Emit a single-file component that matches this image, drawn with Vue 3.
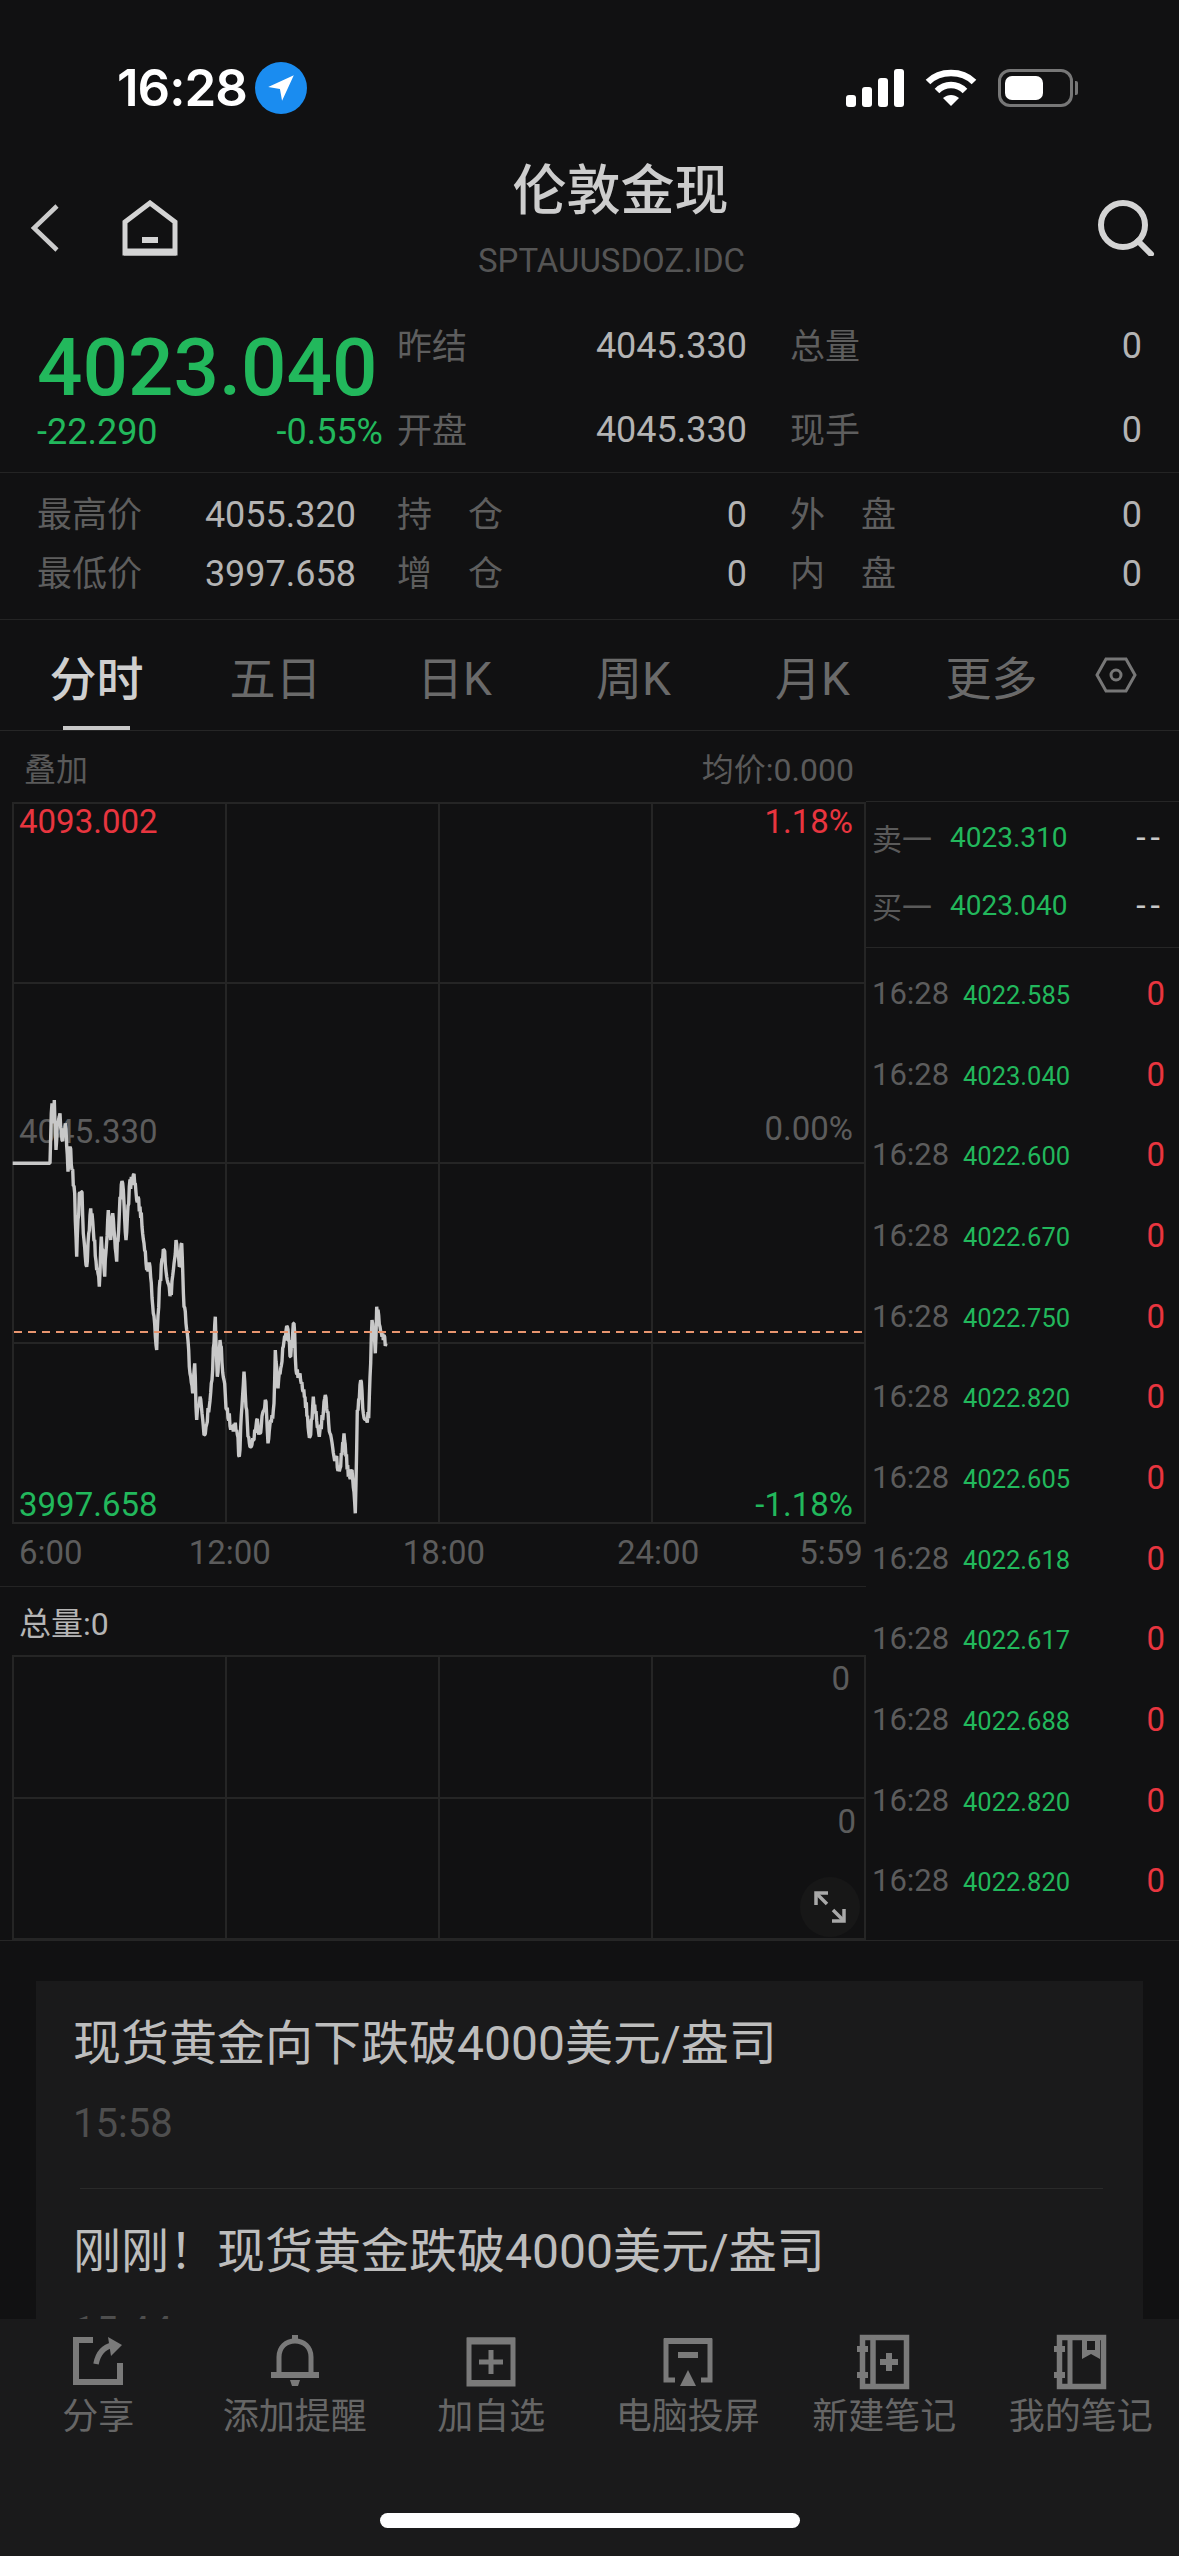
<template>
  <div class="page">
    <div class="status-bar">
      <div class="status-left">
        <span class="clock">16:28</span>
        <span class="locate">
          <svg width="32" height="32" viewBox="0 0 30 30"><path d="M27 3 L3 14 L14 16 L16 27 Z" fill="#fff" /></svg>
        </span>
      </div>
      <div class="status-right">
        <svg width="58" height="38" viewBox="0 0 58 38" fill="#fff">
          <rect x="0" y="26" width="10" height="12" rx="3" />
          <rect x="16" y="18" width="10" height="20" rx="3" />
          <rect x="32" y="9" width="10" height="29" rx="3" />
          <rect x="48" y="0" width="10" height="38" rx="3" />
        </svg>
        <svg width="52" height="38" viewBox="0 0 52 38" fill="none" stroke="#fff" stroke-width="6.5">
          <path d="M3 13 C15 1 37 1 49 13" />
          <path d="M12 22 C20 14 32 14 40 22" />
          <path d="M26 37 L18 29 C23 25 29 25 34 29 Z" fill="#fff" stroke="none" />
        </svg>
        <div class="battery">
          <div class="battery-shell"><div class="battery-fill"></div></div>
          <div class="battery-nub"></div>
        </div>
      </div>
    </div>

    <header class="nav">
      <div class="nav-left">
        <svg width="30" height="48" viewBox="0 0 30 48" fill="none" stroke="#ccc" stroke-width="4.5">
          <path d="M27 2 L4 24 L27 46" />
        </svg>
        <svg width="56" height="56" viewBox="0 0 56 56" fill="none" stroke="#d4d4d4">
          <path d="M3 53 V22 L28 3 L53 22 V53 Z" stroke-width="5" />
          <path d="M2 52 H54" stroke-width="7" />
          <path d="M20 40 H36" stroke-width="6" />
        </svg>
      </div>
      <div class="nav-title">
        <div class="nav-name">伦敦金现</div>
        <div class="nav-code">SPTAUUSDOZ.IDC</div>
      </div>
      <svg class="nav-search" width="58" height="56" viewBox="0 0 58 56" fill="none" stroke="#d4d4d4" stroke-width="6">
        <circle cx="26" cy="25" r="22" />
        <path d="M41 41 L54 54" stroke-linecap="round" />
      </svg>
    </header>

    <section class="quote">
      <div class="quote-main">
        <div class="last-price">4023.040</div>
        <div class="change"><span>-22.290</span><span>-0.55%</span></div>
      </div>
      <div v-for="cell in quoteCells" :key="cell.label" class="pair" :class="cell.col">
        <span class="pair-label">{{ cell.label }}</span>
        <span class="pair-value">{{ cell.value }}</span>
      </div>
    </section>

    <section class="stats">
      <div v-for="cell in statCells" :key="cell.label" class="pair" :class="cell.col">
        <span class="pair-label" :class="{ spaced: cell.spaced }">
          <i v-for="ch in cell.label" :key="ch">{{ ch }}</i>
        </span>
        <span class="pair-value">{{ cell.value }}</span>
      </div>
    </section>

    <nav class="tabs">
      <span v-for="(tab, i) in tabs" :key="tab" class="tab" :class="{ active: i === 0 }">{{ tab }}</span>
      <svg class="tab-gear" width="42" height="38" viewBox="0 0 42 38" fill="none" stroke="#777" stroke-width="3">
        <path d="M11 3 H31 L40 19 L31 35 H11 L2 19 Z" />
        <circle cx="21" cy="19" r="5" />
      </svg>
    </nav>

    <div class="market">
      <div class="charts">
        <div class="chart-head">
          <span>叠加</span>
          <span>均价:0.000</span>
        </div>
        <div class="chart price-chart">
          <div class="grid-cells">
            <div v-for="n in 16" :key="n" class="cell"></div>
          </div>
          <span class="mark tl up">4093.002</span>
          <span class="mark tr up">1.18%</span>
          <span class="mark ml">4045.330</span>
          <span class="mark mr">0.00%</span>
          <span class="mark bl down">3997.658</span>
          <span class="mark br down">-1.18%</span>
          <svg class="price-line" viewBox="0 0 854 722">
            <polyline :points="linePoints" fill="none" stroke="#c8c8c8" stroke-width="3.4" stroke-linejoin="bevel" />
            <path d="M2 530 H854" stroke="#e8956f" stroke-width="2" stroke-dasharray="8 6" />
          </svg>
        </div>
        <div class="axis">
          <span v-for="t in axisLabels" :key="t">{{ t }}</span>
        </div>
        <div class="volume-head">总量:0</div>
        <div class="chart volume-chart">
          <div class="grid-cells two">
            <div v-for="n in 8" :key="n" class="cell"></div>
          </div>
          <span class="vol-mark first">0</span>
          <span class="vol-mark second">0</span>
          <span class="expand">
            <svg width="34" height="34" viewBox="0 0 34 34" fill="none" stroke="#a8a8a8" stroke-width="3.5">
              <path d="M4 4 L14 14 M20 20 L30 30" />
              <path d="M3 15 V3 H15 M31 19 V31 H19" />
            </svg>
          </span>
        </div>
      </div>

      <aside class="side">
        <div class="book">
          <div v-for="b in book" :key="b.label" class="book-row">
            <span class="book-label">{{ b.label }}</span>
            <span class="book-price">{{ b.price }}</span>
            <span class="book-size">--</span>
          </div>
        </div>
        <div class="trades">
          <div v-for="(p, i) in trades" :key="i" class="trade-row">
            <span class="trade-time">16:28</span>
            <span class="trade-price">{{ p }}</span>
            <span class="trade-size">0</span>
          </div>
        </div>
      </aside>
    </div>

    <div class="feed">
      <div class="feed-card">
        <div class="news-item">
          <div class="news-title">现货黄金向下跌破4000美元/盎司</div>
          <div class="news-time">15:58</div>
        </div>
        <div class="news-divider"></div>
        <div class="news-item">
          <div class="news-title">刚刚！现货黄金跌破4000美元/盎司</div>
          <div class="news-time">15:44</div>
        </div>
      </div>
    </div>

    <footer class="toolbar">
      <div class="tools">
        <div class="tool">
          <svg width="54" height="54" viewBox="0 0 54 54" fill="none" stroke="#7a7a7a" stroke-width="6">
            <path d="M22 5 H5 V47 H49 V28" />
            <path d="M25 29 C27 18 32 12 42 10" stroke-width="5.5" />
            <path d="M37 2 L51 10 L40 21 Z" fill="#7a7a7a" stroke="none" />
          </svg>
          <span>分享</span>
        </div>
        <div class="tool">
          <svg width="54" height="54" viewBox="0 0 54 54" fill="none" stroke="#7a7a7a" stroke-width="5">
            <path d="M11 40 V22 C11 12 18 6 27 6 C36 6 43 12 43 22 V40" />
            <path d="M24 0 H30 V6 H24 Z" fill="#7a7a7a" stroke="none" />
            <path d="M3 40 H51" stroke-width="6" />
            <path d="M22 45 H32 L30 51 H24 Z" fill="#7a7a7a" stroke="none" />
          </svg>
          <span>添加提醒</span>
        </div>
        <div class="tool">
          <svg width="54" height="54" viewBox="0 0 54 54" fill="none" stroke="#7a7a7a" stroke-width="5">
            <rect x="5" y="5" width="44" height="44" />
            <path d="M3 6 H51" stroke-width="7" />
            <path d="M3 48 H51" stroke-width="6" />
            <path d="M27 15 V39 M15 27 H39" stroke-width="5" />
          </svg>
          <span>加自选</span>
        </div>
        <div class="tool">
          <svg width="54" height="54" viewBox="0 0 54 54" fill="none" stroke="#7a7a7a" stroke-width="5">
            <path d="M14 45 H5 V6 H49 V45 H40" />
            <path d="M3 6 H51" stroke-width="6" />
            <path d="M17 20 H37" stroke-width="6" />
            <path d="M27 35 L35 51 H19 Z" fill="#7a7a7a" stroke="none" />
          </svg>
          <span>电脑投屏</span>
        </div>
        <div class="tool">
          <svg width="54" height="56" viewBox="0 0 54 56" fill="none" stroke="#7a7a7a" stroke-width="5.5">
            <rect x="5.5" y="3.5" width="44" height="49" />
            <path d="M16 3 V53" />
            <rect x="0" y="12" width="11" height="6" fill="#7a7a7a" stroke="none" />
            <rect x="0" y="38" width="11" height="6" fill="#7a7a7a" stroke="none" />
            <path d="M32 19 V37 M23 28 H41" stroke-width="6" />
          </svg>
          <span>新建笔记</span>
        </div>
        <div class="tool">
          <svg width="54" height="56" viewBox="0 0 54 56" fill="none" stroke="#7a7a7a" stroke-width="5.5">
            <rect x="5.5" y="3.5" width="44" height="49" />
            <path d="M16 3 V53" stroke-width="5" />
            <rect x="0" y="12" width="11" height="6" fill="#7a7a7a" stroke="none" />
            <rect x="0" y="38" width="11" height="6" fill="#7a7a7a" stroke="none" />
            <path d="M28 3 H46 V25 L37 20 L28 25 Z" fill="#7a7a7a" stroke="none" />
            <rect x="33" y="7" width="8" height="9" fill="#1a1a1b" stroke="none" />
          </svg>
          <span>我的笔记</span>
        </div>
      </div>
      <div class="home-bar"></div>
    </footer>
  </div>
</template>

<script setup>
import { computed } from 'vue';

const quoteCells = [
  { label: '昨结', value: '4045.330', col: 'col-a' },
  { label: '总量', value: '0', col: 'col-b' },
  { label: '开盘', value: '4045.330', col: 'col-a' },
  { label: '现手', value: '0', col: 'col-b' },
];

const statCells = [
  { label: '最高价', value: '4055.320', col: 'col-0' },
  { label: '持仓', value: '0', col: 'col-a', spaced: true },
  { label: '外盘', value: '0', col: 'col-b', spaced: true },
  { label: '最低价', value: '3997.658', col: 'col-0' },
  { label: '增仓', value: '0', col: 'col-a', spaced: true },
  { label: '内盘', value: '0', col: 'col-b', spaced: true },
];

const tabs = ['分时', '五日', '日K', '周K', '月K', '更多'];
const axisLabels = ['6:00', '12:00', '18:00', '24:00', '5:59'];

const book = [
  { label: '卖一', price: '4023.310' },
  { label: '买一', price: '4023.040' },
];

const trades = [
  '4022.585', '4023.040', '4022.600', '4022.670', '4022.750', '4022.820',
  '4022.605', '4022.618', '4022.617', '4022.688', '4022.820', '4022.820',
];

// traced from the intraday curve, in 3x crop coordinates
const trace = [
  [38,250],[150,250],[152,170],[156,70],[160,130],[163,60],[168,210],[172,130],[180,100],[186,180],
  [196,130],[204,275],[210,200],[216,270],[224,340],[230,530],[238,340],[246,335],[250,460],[260,560],
  [272,385],[280,450],[290,570],[298,620],[304,470],[314,590],[325,390],[332,480],[338,400],[350,545],
  [360,350],[368,310],[378,480],[388,320],[400,285],[410,360],[420,380],[432,490],[440,570],[450,560],
  [460,700],[470,810],[480,600],[492,510],[500,590],[514,645],[528,480],[538,560],[545,490],[552,680],
  [562,760],[568,860],[578,940],[584,850],[590,1020],[600,950],[612,1065],[628,980],[636,900],[646,710],
  [652,890],[660,780],[672,900],[680,990],[694,1040],[710,1050],[718,1130],[732,875],[744,1070],[754,1100],
  [770,1020],[780,1060],[798,965],[804,1090],[822,970],[826,810],[834,925],[850,800],[862,740],[872,830],
  [882,730],[888,870],[900,880],[915,950],[930,1070],[940,950],[958,1070],[976,945],[990,1060],[1002,1130],
  [1020,1165],[1032,1060],[1045,1190],[1056,1170],[1066,1300],[1072,990],[1084,905],[1090,1000],[1106,1015],
  [1116,720],[1126,820],[1130,680],[1140,740],[1150,780],[1158,790],
];

const linePoints = computed(() => {
  let seed = 17;
  const jitter = () => {
    seed = (seed * 16807) % 2147483647;
    return seed / 2147483647 - 0.5;
  };
  const pts = [];
  trace.forEach(([x, y], i) => {
    const next = trace[i + 1];
    const steps = next && i > 0 ? Math.max(1, Math.round((next[0] - x) / 2)) : 1;
    for (let s = 0; s < steps; s++) {
      const t = s / steps;
      const yy = next ? y + (next[1] - y) * t : y;
      const xx = next ? x + (next[0] - x) * t : x;
      const noise = i > 1 && s > 0 ? jitter() * 40 : 0;
      pts.push(`${(xx / 3 - 12).toFixed(1)},${(1080 + (yy + noise) / 3 - 802).toFixed(1)}`);
    }
  });
  return pts.join(' ');
});
</script>

<style>
html,
body {
  margin: 0;
  background: #111112;
}
</style>

<style scoped>
.page {
  width: 1179px;
  height: 2556px;
  overflow: hidden;
  display: flex;
  flex-direction: column;
  background: #111112;
  color: #bbb;
  font-family: Roboto, "Noto Sans CJK SC", sans-serif;
}

.status-bar {
  height: 130px;
  flex: none;
  padding: 62px 101px 0 117px;
  box-sizing: border-box;
  display: flex;
  justify-content: space-between;
  align-items: flex-start;
}

.status-left {
  display: flex;
  align-items: center;
  gap: 8px;
}

.clock {
  font-family: Inter, sans-serif;
  font-size: 51px;
  font-weight: 600;
  line-height: 52px;
  color: #fff;
  letter-spacing: -1px;
}

.locate {
  width: 52px;
  height: 52px;
  border-radius: 50%;
  background: #1a8cf0;
  display: flex;
  align-items: center;
  justify-content: center;
}

.status-right {
  display: flex;
  align-items: center;
  gap: 21px;
  padding-top: 7px;
}

.battery {
  display: flex;
  align-items: center;
  gap: 2px;
}

.battery-shell {
  width: 75px;
  height: 38px;
  box-sizing: border-box;
  border: 3px solid #777;
  border-radius: 12px;
  padding: 4px;
}

.battery-fill {
  width: 38px;
  height: 100%;
  background: #fff;
  border-radius: 7px;
}

.battery-nub {
  width: 3px;
  height: 14px;
  background: #777;
  border-radius: 0 2px 2px 0;
}

.nav {
  height: 170px;
  flex: none;
  position: relative;
  padding: 70px 24px 0 30px;
  box-sizing: border-box;
  display: flex;
  justify-content: space-between;
  align-items: flex-start;
}

.nav-left {
  display: flex;
  align-items: center;
  gap: 62px;
}

.nav-title {
  position: absolute;
  left: 0;
  right: 0;
  top: 32px;
  text-align: center;
  padding-left: 62px;
}

.nav-name {
  font-size: 54px;
  font-weight: 500;
  line-height: 60px;
  color: #cdcdcd;
}

.nav-code {
  margin-top: 19px;
  margin-left: -18px;
  font-size: 33px;
  line-height: 40px;
  color: #555;
}

.quote {
  height: 173px;
  flex: none;
  padding: 4px 37px 0 37px;
  box-sizing: border-box;
  border-bottom: 1px solid #242424;
  display: grid;
  grid-template-columns: 360px 350px 395px;
  grid-template-rows: 84px 84px;
}

.quote-main {
  grid-row: 1 / span 2;
  padding-top: 22px;
  width: 346px;
}

.last-price {
  font-size: 80px;
  font-weight: 500;
  line-height: 84px;
  color: #22b85c;
  white-space: nowrap;
}

.change {
  display: flex;
  justify-content: space-between;
  font-size: 36px;
  line-height: 44px;
  color: #22b85c;
}

.pair {
  display: flex;
  justify-content: space-between;
  align-items: center;
  font-size: 36px;
}

.col-0 {
  margin-right: 41px;
}

.col-b {
  margin-left: 43px;
}

.pair-label {
  color: #5e5e5e;
  font-size: 35px;
  display: flex;
  padding-bottom: 6px;
}

.pair-label i {
  font-style: normal;
}

.pair-label.spaced {
  width: 106px;
  justify-content: space-between;
}

.pair-value {
  color: #b4b4b4;
}

.stats {
  height: 147px;
  flex: none;
  padding: 12px 37px 0 37px;
  box-sizing: border-box;
  border-bottom: 1px solid #242424;
  display: grid;
  grid-template-columns: 360px 350px 395px;
  grid-template-rows: 59px 59px;
}

.tabs {
  height: 111px;
  flex: none;
  padding-left: 7px;
  box-sizing: border-box;
  border-bottom: 1px solid #262626;
  display: grid;
  grid-template-columns: repeat(6, 179px) 1fr;
  align-items: center;
}

.tab {
  position: relative;
  height: 100%;
  display: flex;
  align-items: center;
  justify-content: center;
  font-size: 46px;
  color: #6a6a6a;
}

.tab.active {
  color: #cfcfcf;
  font-size: 47px;
  font-weight: 500;
}

.tab.active::after {
  content: '';
  position: absolute;
  left: 56px;
  right: 56px;
  bottom: 0;
  height: 4px;
  background: #c8c8c8;
}

.tab-gear {
  justify-self: center;
  margin-left: -29px;
}

.market {
  height: 1210px;
  flex: none;
  display: flex;
  border-bottom: 1px solid #262626;
  box-sizing: border-box;
}

.charts {
  width: 866px;
  flex: none;
}

.chart-head {
  height: 71px;
  padding: 0 12px 0 24px;
  display: flex;
  justify-content: space-between;
  align-items: center;
  font-size: 32px;
  color: #5a5a5a;
}

.chart {
  position: relative;
  margin-left: 12px;
  width: 854px;
  box-sizing: border-box;
}

.price-chart {
  height: 722px;
}

.volume-chart {
  height: 285px;
}

.grid-cells {
  width: 100%;
  height: 100%;
  box-sizing: border-box;
  border-top: 2px solid #252525;
  border-left: 2px solid #252525;
  display: grid;
  grid-template-columns: repeat(4, 1fr);
  grid-template-rows: repeat(4, 1fr);
}

.grid-cells.two {
  grid-template-rows: repeat(2, 1fr);
}

.cell {
  border-right: 2px solid #252525;
  border-bottom: 2px solid #252525;
}

.mark {
  position: absolute;
  font-size: 33px;
  line-height: 40px;
  color: #5c5c5c;
}

.tl { left: 7px; top: 0; }
.tr { right: 13px; top: 0; }
.ml { left: 7px; top: 310px; }
.mr { right: 13px; top: 307px; }
.bl { left: 7px; top: 683px; }
.br { right: 13px; top: 683px; }

.mark.up { color: #e8353f; }
.mark.down { color: #22b85c; }

.price-line {
  position: absolute;
  left: 0;
  top: 0;
  width: 854px;
  height: 722px;
}

.axis {
  height: 63px;
  padding: 0 0 5px 19px;
  border-bottom: 1px solid #242424;
  box-sizing: border-box;
  display: flex;
  align-items: center;
  font-size: 33px;
  color: #5c5c5c;
}

.axis span:nth-child(2) { margin-left: 106px; }
.axis span:nth-child(3) { margin-left: 132px; }
.axis span:nth-child(4) { margin-left: 132px; }
.axis span:nth-child(5) { margin-left: 100px; }

.volume-head {
  height: 68px;
  padding-left: 19px;
  display: flex;
  align-items: center;
  font-size: 32px;
  color: #b5b5b5;
}

.vol-mark {
  position: absolute;
  font-size: 33px;
  line-height: 40px;
  color: #5c5c5c;
}

.vol-mark.first { right: 16px; top: 4px; }
.vol-mark.second { right: 10px; top: 147px; }

.expand {
  position: absolute;
  left: 788px;
  top: 222px;
  width: 60px;
  height: 60px;
  border-radius: 50%;
  background: #171717;
  display: flex;
  align-items: center;
  justify-content: center;
}

.side {
  flex: 1;
  padding-top: 70px;
  min-width: 0;
}

.book {
  border-top: 1px solid #262626;
  border-bottom: 1px solid #262626;
  padding: 1px 14px 8px 6px;
}

.book-row {
  height: 68px;
  display: flex;
  align-items: center;
}

.book-label {
  width: 78px;
  font-size: 30px;
  color: #5a5a5a;
}

.book-price {
  font-size: 28px;
  color: #22b85c;
}

.book-size {
  margin-left: auto;
  font-size: 34px;
  color: #c8c8c8;
  letter-spacing: 5px;
}

.trades {
  padding: 5px 14px 0 6px;
}

.trade-row {
  height: 80.7px;
  display: flex;
  align-items: center;
}

.trade-time {
  width: 91px;
  font-size: 31px;
  color: #5c5c5c;
}

.trade-price {
  font-size: 25.5px;
  color: #22b85c;
  padding-top: 3px;
}

.trade-size {
  margin-left: auto;
  font-size: 33px;
  color: #e8353f;
}

.feed {
  flex: 1;
  min-height: 0;
  overflow: hidden;
  padding: 40px 36px 0;
}

.feed-card {
  background: #1a1a1b;
  height: 100%;
  overflow: hidden;
}

.news-item {
  padding: 33px 37px 39px;
}

.news-title {
  font-size: 48px;
  line-height: 60px;
  color: #bdbdbd;
}

.news-time {
  margin-top: 25px;
  font-size: 40px;
  line-height: 50px;
  color: #4e4e4e;
}

.news-divider {
  height: 1px;
  margin: 0 40px 0 44px;
  background: #2a2a2a;
}

.toolbar {
  height: 237px;
  flex: none;
  background: #1a1a1b;
  padding-top: 15px;
  box-sizing: border-box;
  display: flex;
  flex-direction: column;
  align-items: center;
}

.tools {
  width: 100%;
  display: grid;
  grid-template-columns: repeat(6, 196.5px);
}

.tool {
  display: flex;
  flex-direction: column;
  align-items: center;
  font-size: 36px;
  line-height: 48px;
  color: #666;
}

.tool svg {
  height: 56px;
}

.tool span {
  padding-top: 3px;
}

.home-bar {
  margin-top: 72px;
  width: 420px;
  height: 15px;
  background: #fff;
  border-radius: 8px;
}
</style>
